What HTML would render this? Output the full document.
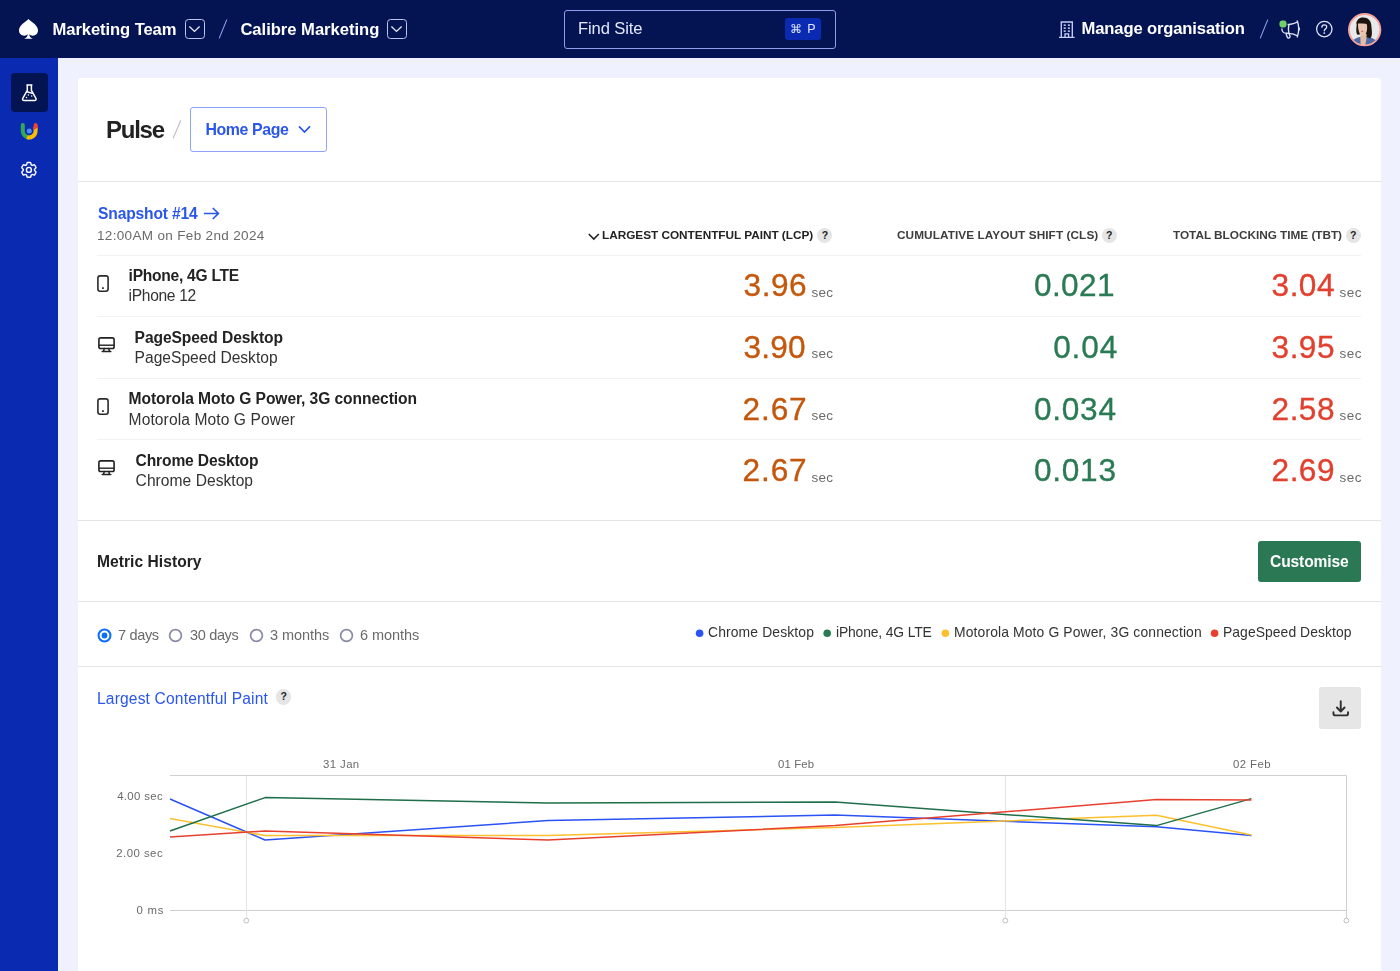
<!DOCTYPE html>
<html lang="en"><head><meta charset="utf-8"><title>Pulse – Calibre Marketing</title>
<style>
html,body{margin:0;padding:0}
body{width:1400px;height:971px;overflow:hidden;position:relative;background:#eff2fe;font-family:"Liberation Sans",Arial,sans-serif;}
.t{position:absolute;white-space:nowrap;line-height:1;}
.i{position:absolute;display:block;overflow:visible}
.hl{position:absolute;height:1px}
#top{position:absolute;left:0;top:0;width:1400px;height:58px;background:#041453}
#side{position:absolute;left:0;top:58px;width:58px;height:913px;background:#0a2ab2}
#card{position:absolute;left:78px;top:78px;width:1303px;height:900px;background:#fff;border-radius:3px}
.dd{position:absolute;width:18px;height:18px;border:1px solid #bcc4ea;border-radius:3.5px;box-sizing:content-box}
.q{position:absolute;width:15.2px;height:15.2px;border-radius:50%;background:#e5e5e5;color:#222;font-size:10.5px;font-weight:700;line-height:15.2px;text-align:center}
.dot{position:absolute;width:7.6px;height:7.6px;border-radius:50%}
#search{position:absolute;left:564px;top:10px;width:270px;height:37px;border:1px solid #8d9ef0;border-radius:3px}
#kbd{position:absolute;left:785px;top:17.6px;width:36.4px;height:22.2px;background:#0a2ab2;border-radius:3px}
#hp{position:absolute;left:190px;top:107.4px;width:135px;height:42.2px;border:1px solid #8ea2f8;border-radius:3px;background:#fff}
#cust{position:absolute;left:1257.6px;top:541px;width:103.4px;height:41px;background:#2b7855;border-radius:3px}
#dl{position:absolute;left:1319px;top:687px;width:42px;height:42px;background:#e6e6e6;border-radius:3px}
#tile{position:absolute;left:11px;top:73px;width:37px;height:39px;background:#041453;border-radius:4px}
</style></head><body>
<div id="top"></div><div id="side"></div><div id="card"></div>
<div id="tile"></div>
<!-- logo -->
<svg class="i" style="left:18.9px;top:18.9px" width="19" height="19.8" viewBox="0 0 19.2 20.4" preserveAspectRatio="none"><path fill="#fff" d="M9.6 0C8.400 2 0 5.800 0 11.700c0 3.300 2.400 5.600 5.300 5.600 1.500 0 2.800-.6 3.600-1.500C8.700 18 7.500 19.500 5.200 20.400h8.800c-2.300-.9-3.500-2.400-3.700-4.600.8.9 2.100 1.500 3.600 1.500 2.900 0 5.300-2.300 5.300-5.600C19.200 5.800 10.800 2 9.600 0z"/></svg>
<div class="dd" style="left:185px;top:19px"></div>
<svg class="i" style="left:185px;top:19px" width="20" height="20" viewBox="0 0 20 20"><path d="M4.400 7.600L9.500 12.400L14.600 7.600" fill="none" stroke="#e6eafc" stroke-width="1.400"/></svg>
<div class="dd" style="left:387.300px;top:19px"></div>
<svg class="i" style="left:387.300px;top:19px" width="20" height="20" viewBox="0 0 20 20"><path d="M4.400 7.600L9.500 12.400L14.600 7.600" fill="none" stroke="#e6eafc" stroke-width="1.400"/></svg>
<svg class="i" style="left:218px;top:19px" width="10" height="20" viewBox="0 0 10 20"><path d="M8.8 0.600L1.200 19.400" stroke="#8d9ef0" stroke-width="1.1"/></svg>
<svg class="i" style="left:1259px;top:19px" width="10" height="20" viewBox="0 0 10 20"><path d="M8.8 0.600L1.200 19.400" stroke="#8d9ef0" stroke-width="1.1"/></svg>
<div id="search"></div><div id="kbd"></div>
<!-- building -->
<svg class="i" style="left:1058.700px;top:21px" width="15.600" height="17" viewBox="0 0 15 17" preserveAspectRatio="none"><g fill="none" stroke="#c6cef7" stroke-width="1.3"><path d="M2.200 16.200V1h10.600v15.200M0 16.300h15"/><path d="M5.800 16.200v-3.400h3.400v3.400"/></g><g fill="#c6cef7"><rect x="4.500" y="3.400" width="2" height="1.500"/><rect x="8.500" y="3.400" width="2" height="1.500"/><rect x="4.500" y="6.400" width="2" height="1.500"/><rect x="8.500" y="6.400" width="2" height="1.500"/><rect x="4.500" y="9.400" width="2" height="1.500"/><rect x="8.500" y="9.400" width="2" height="1.500"/></g></svg>
<!-- megaphone -->
<svg class="i" style="left:1279.350px;top:17.900px" width="23.300" height="23.300" viewBox="0 0 24 24"><path fill="none" stroke="#dfe4fb" stroke-width="1.400" stroke-linecap="round" stroke-linejoin="round" d="M10.340 15.840c-.688-.060-1.386-.090-2.090-.090H7.500a4.500 4.500 0 110-9h.750c.704 0 1.402-.030 2.090-.090m0 9.180c.253.962.584 1.892.985 2.783.247.550.060 1.210-.463 1.511l-.657.380c-.551.318-1.260.117-1.527-.461a20.845 20.845 0 01-1.440-4.282m3.102.069a18.030 18.030 0 01-.590-4.590c0-1.586.205-3.124.590-4.590m0 9.180a23.848 23.848 0 018.835 2.535M10.340 6.660a23.847 23.847 0 008.835-2.535m0 0A23.740 23.740 0 0018.795 3m.380 1.125a23.910 23.910 0 011.014 5.395m-1.014 8.855c-.118.380-.245.754-.380 1.125m.380-1.125a23.910 23.910 0 001.014-5.395m0-3.460c.495.413.811 1.035.811 1.730 0 .695-.316 1.317-.811 1.730m0-3.460a24.347 24.347 0 010 3.460"/></svg><svg class="i" style="left:1277.700px;top:18.600px" width="10" height="10" viewBox="0 0 10 10"><circle cx="5" cy="5" r="4.100" fill="#6fd06a" stroke="#041453" stroke-width="1"/></svg>
<!-- help -->
<svg class="i" style="left:1315px;top:20px" width="18" height="18" viewBox="0 0 18 18"><circle cx="9.300" cy="9.100" r="7.700" fill="none" stroke="#dfe4fb" stroke-width="1.300"/><path d="M6.900 7.200c0-1.400 1-2.300 2.400-2.300s2.400.9 2.400 2.100c0 1.100-.7 1.600-1.400 2.100-.6.400-1 .8-1 1.700" fill="none" stroke="#dfe4fb" stroke-width="1.300" stroke-linecap="round"/><circle cx="9.300" cy="13.100" r=".9" fill="#dfe4fb"/></svg>
<!-- avatar -->
<svg class="i" style="left:1347.600px;top:12.650px" width="33.300" height="33.300" viewBox="0 0 33.300 33.300"><defs><clipPath id="av"><circle cx="16.650" cy="16.650" r="15"/></clipPath></defs><circle cx="16.650" cy="16.650" r="15.700" fill="#e8e9eb" stroke="#f7a397" stroke-width="1.900"/><g clip-path="url(#av)"><path d="M8.700 10.200C8.600 6.200 11.800 4.300 15.500 4.400c4.500.1 7.500 3.100 7.800 7.600.3 4 .9 7 .5 10.300l-1.500 3-5 .2z" fill="#1d140e"/><path d="M8.800 9.800l-.5 6.200c-.1 3 .3 5 1.300 5.800l2.200-.3V9.800z" fill="#1d140e"/><path d="M12.500 20.500l-.2 11.500h6.700l-.4-11z" fill="#e3bca6"/><path d="M10 10.200h8.600c1 3.800.6 8.300-.8 10.600-1 1.400-3.200 1.800-4.800.8-2-1.400-3-4.600-3-11.400z" fill="#e9c6b2"/><path d="M8.600 8.600c3.500-1 7.400-.8 10.600.4l.3 2c-3.600-.9-7.300-1-10.900-.3z" fill="#1d140e"/><path d="M13 18.200c.8-.5 1.700-.5 2.500 0-.7.900-1.800.9-2.500 0z" fill="#c9515c"/><path d="M4 28c2-2 5-3.400 8.400-4.300l.3 9.600H4zM28.500 28c-2-2.200-5.500-3.800-9.700-5l-.6 4.500-1.200 5.800h10z" fill="#4f6aa6"/><path d="M19 21.500l4.500 1.800-1.500 2.200-3.200-1.400z" fill="#1d140e"/></g></svg>
<!-- sidebar icons -->
<svg class="i" style="left:21px;top:83.5px" width="17" height="18" viewBox="0 0 17 18"><g fill="none" stroke="#fff" stroke-width="1.500" stroke-linejoin="round" stroke-linecap="round"><path d="M5.850 1.050h5M6.300 1.200v5.200L1.750 14.300c-.55 1 .15 2.200 1.300 2.200h10.600c1.150 0 1.850-1.200 1.300-2.200L10.400 6.400V1.200"/><path d="M5.600 7.700c2 .1 3.800 1.400 5.900 1.500"/></g><circle cx="7.400" cy="10.900" r=".75" fill="#fff"/><circle cx="10.700" cy="12" r=".75" fill="#fff"/><circle cx="5.500" cy="13.500" r=".75" fill="#fff"/></svg>
<svg class="i" style="left:20px;top:122px" width="19" height="19" viewBox="0 0 19 19"><g fill="none" stroke-width="4"><path d="M2.800 3V9A6.400 6.400 0 0 0 9.200 15.400" stroke="#34a853" stroke-linecap="round"/><path d="M15.600 6.500V3" stroke="#ea4335" stroke-linecap="round"/><path d="M7.010 15.010A6.400 6.400 0 0 0 15.600 9V5.600" stroke="#fbbc05"/><path d="M13.500 6.600l4.200-2.400" stroke="#ea4335" stroke-width="2.600"/></g><circle cx="9.300" cy="9" r="2.500" fill="#4d8df6"/></svg>
<svg class="i" style="left:19.100px;top:160.300px" width="19.800" height="19.800" viewBox="0 0 24 24"><g fill="none" stroke="#fff" stroke-width="1.700" stroke-linejoin="round" stroke-linecap="round"><path d="M9.594 3.940c.090-.542.560-.940 1.110-.940h2.593c.550 0 1.020.398 1.110.940l.213 1.281c.063.374.313.686.645.870.074.040.147.083.220.127.324.196.720.257 1.075.124l1.217-.456a1.125 1.125 0 011.370.490l1.296 2.247a1.125 1.125 0 01-.260 1.431l-1.003.827c-.293.240-.438.613-.431.992a6.759 6.759 0 010 .255c-.007.378.138.750.430.990l1.005.828c.424.350.534.954.260 1.430l-1.298 2.247a1.125 1.125 0 01-1.369.491l-1.217-.456c-.355-.133-.750-.072-1.076.124a6.570 6.570 0 01-.220.128c-.331.183-.581.495-.644.869l-.213 1.280c-.090.543-.560.941-1.110.941h-2.594c-.550 0-1.020-.398-1.110-.940l-.213-1.281c-.062-.374-.312-.686-.644-.870a6.520 6.520 0 01-.220-.127c-.325-.196-.720-.257-1.076-.124l-1.217.456a1.125 1.125 0 01-1.369-.490l-1.297-2.247a1.125 1.125 0 01.260-1.431l1.004-.827c.292-.240.437-.613.430-.992a6.932 6.932 0 010-.255c.007-.378-.138-.750-.430-.990l-1.004-.828a1.125 1.125 0 01-.260-1.430l1.297-2.247a1.125 1.125 0 011.370-.491l1.216.456c.356.133.751.072 1.076-.124.072-.44.146-.87.220-.128.332-.183.582-.495.644-.869l.214-1.281z"/><path d="M15 12a3 3 0 11-6 0 3 3 0 016 0z"/></g></svg>
<!-- page head -->
<svg class="i" style="left:172px;top:120px" width="10" height="19" viewBox="0 0 10 19"><path d="M8.800 0.300L1.200 18.300" stroke="#bdbdbd" stroke-width="1.100"/></svg>
<div id="hp"></div>
<svg class="i" style="left:298px;top:125px" width="13" height="9" viewBox="0 0 13 9"><path d="M1 1.400l5.500 5.700L12 1.400" fill="none" stroke="#2a56ea" stroke-width="1.700"/></svg>
<div class="hl" style="left:78px;top:181px;width:1303px;background:#e5e5e5"></div>
<!-- snapshot arrow -->
<svg class="i" style="left:203px;top:206.500px" width="17" height="13" viewBox="0 0 17 13"><path d="M.8 6.500h14.400M9.800 1l5.600 5.500L9.800 12" fill="none" stroke="#2a56ea" stroke-width="1.700"/></svg>
<svg class="i" style="left:588px;top:232.500px" width="12" height="8" viewBox="0 0 12 8"><path d="M.8 1l5 5 5-5" fill="none" stroke="#222" stroke-width="1.600"/></svg>
<span class="q" style="left:817.3px;top:227.5px">?</span><span class="q" style="left:1101.7px;top:227.5px">?</span><span class="q" style="left:1345.7px;top:227.5px">?</span>
<div class="hl" style="left:97px;top:255px;width:1264px;background:#f2f2f2"></div><div class="hl" style="left:97px;top:316px;width:1264px;background:#f2f2f2"></div><div class="hl" style="left:97px;top:378px;width:1264px;background:#f2f2f2"></div><div class="hl" style="left:97px;top:439px;width:1264px;background:#f2f2f2"></div>
<div class="hl" style="left:78px;top:520px;width:1303px;background:#e5e5e5"></div>
<svg class="i" style="left:97px;top:274.6px" width="12" height="17.2" viewBox="0 0 12 17.2"><rect x="0.9" y="0.9" width="10.2" height="15.4" rx="2.2" fill="none" stroke="#2a2a2a" stroke-width="1.6"/><rect x="5" y="12.2" width="1.9" height="1.7" rx=".4" fill="#2a2a2a"/></svg><svg class="i" style="left:97.5px;top:336.6px" width="17" height="16" viewBox="0 0 17 16"><rect x="0.9" y="0.9" width="15.2" height="10.6" rx="1.8" fill="none" stroke="#222" stroke-width="1.6"/><path d="M1 8.2h15" stroke="#222" stroke-width="1.4"/><path d="M6.2 11.5l-0.6 2.6M10.8 11.5l0.6 2.6M4.2 14.6h8.6" stroke="#222" stroke-width="1.5" fill="none" stroke-linecap="round"/></svg><svg class="i" style="left:97px;top:397.90000000000003px" width="12" height="17.2" viewBox="0 0 12 17.2"><rect x="0.9" y="0.9" width="10.2" height="15.4" rx="2.2" fill="none" stroke="#2a2a2a" stroke-width="1.6"/><rect x="5" y="12.2" width="1.9" height="1.7" rx=".4" fill="#2a2a2a"/></svg><svg class="i" style="left:97.5px;top:459.9px" width="17" height="16" viewBox="0 0 17 16"><rect x="0.9" y="0.9" width="15.2" height="10.6" rx="1.8" fill="none" stroke="#222" stroke-width="1.6"/><path d="M1 8.2h15" stroke="#222" stroke-width="1.4"/><path d="M6.2 11.5l-0.6 2.6M10.8 11.5l0.6 2.6M4.2 14.6h8.6" stroke="#222" stroke-width="1.5" fill="none" stroke-linecap="round"/></svg>
<div id="cust"></div>
<div class="hl" style="left:78px;top:601px;width:1303px;background:#e5e5e5"></div>
<svg class="i" style="left:96.5px;top:627.5px" width="15" height="15" viewBox="0 0 15 15"><circle cx="7.5" cy="7.5" r="5.950" fill="#fff" stroke="#0d6efd" stroke-width="2.100"/><circle cx="7.5" cy="7.5" r="2.900" fill="#0d6efd"/></svg><svg class="i" style="left:167.8px;top:627.5px" width="15" height="15" viewBox="0 0 15 15"><circle cx="7.5" cy="7.5" r="5.900" fill="#fff" stroke="#888ba3" stroke-width="1.700"/></svg><svg class="i" style="left:248.5px;top:627.5px" width="15" height="15" viewBox="0 0 15 15"><circle cx="7.5" cy="7.5" r="5.900" fill="#fff" stroke="#888ba3" stroke-width="1.700"/></svg><svg class="i" style="left:338.5px;top:627.5px" width="15" height="15" viewBox="0 0 15 15"><circle cx="7.5" cy="7.5" r="5.900" fill="#fff" stroke="#888ba3" stroke-width="1.700"/></svg>
<svg class="i" style="left:694px;top:628px" width="10" height="10" viewBox="0 0 10 10"><circle cx="5.60" cy="5.20" r="3.8" fill="#2a52f5"/></svg><svg class="i" style="left:822px;top:628px" width="10" height="10" viewBox="0 0 10 10"><circle cx="5.20" cy="5.20" r="3.8" fill="#2a7a54"/></svg><svg class="i" style="left:940px;top:628px" width="10" height="10" viewBox="0 0 10 10"><circle cx="5.40" cy="5.20" r="3.8" fill="#fcc02e"/></svg><svg class="i" style="left:1209px;top:628px" width="10" height="10" viewBox="0 0 10 10"><circle cx="5.60" cy="5.20" r="3.8" fill="#e8402f"/></svg>
<div class="hl" style="left:78px;top:666px;width:1303px;background:#e5e5e5"></div>
<span class="q" style="left:276.2px;top:689.4px">?</span>
<div id="dl"></div>
<svg class="i" style="left:1331.500px;top:699.500px" width="17.800" height="17" viewBox="0 0 17.800 17"><g fill="none" stroke="#2f2f2f" stroke-width="1.900" stroke-linecap="round" stroke-linejoin="round"><path d="M8.750 1.300v10M4.950 7.500l3.800 4 3.800-4"/><path d="M1.450 12.100v1.300c0 1.100.9 2 2 2h10.600c1.100 0 2-.9 2-2v-1.300"/></g></svg>
<svg class="i" style="left:0;top:740px" width="1400" height="231" viewBox="0 740 1400 231">
<g stroke="#cfcfcf" stroke-width="1" fill="none">
<path d="M170 775.5H1346.5M170 910.5H1346.5"/>
</g>
<g stroke="#e4e4e4" stroke-width="1" fill="none"><path d="M246.5 776V918M1005.5 776V918"/></g>
<path d="M1346.5 775.5V918" stroke="#cfcfcf" stroke-width="1" fill="none"/>
<g fill="#fff" stroke="#b5b5b5" stroke-width="0.9"><circle cx="246.3" cy="920.6" r="2.4"/><circle cx="1005.3" cy="920.6" r="2.4"/><circle cx="1346.4" cy="920.6" r="2.4"/></g>
<polyline points="170.0,799.0 265.0,840.0 548.0,820.6 835.0,815.0 1156.5,826.8 1251.4,835.6" fill="none" stroke="#2a52f5" stroke-width="1.5" stroke-linejoin="round"/>
<polyline points="170.0,818.6 265.0,835.6 548.0,835.6 835.0,827.4 1156.5,815.2 1251.4,835.0" fill="none" stroke="#fcc02e" stroke-width="1.5" stroke-linejoin="round"/>
<polyline points="170.0,831.0 265.0,797.6 548.0,803.0 835.0,802.0 1156.5,825.6 1251.4,798.6" fill="none" stroke="#1f6e49" stroke-width="1.5" stroke-linejoin="round"/>
<polyline points="170.0,837.0 265.0,831.0 548.0,840.0 835.0,825.6 1156.5,799.6 1251.4,800.0" fill="none" stroke="#e8402f" stroke-width="1.5" stroke-linejoin="round"/>
</svg>
<div id="txt" style="position:absolute;left:0;top:0;width:1400px;height:971px;will-change:transform">
<span class="t" id="t1" style="top:22.00px;font-size:16.6px;font-weight:700;color:#fff;left:52.60px;letter-spacing:-0.093px;">Marketing Team</span>
<span class="t" id="t2" style="top:22.00px;font-size:16.6px;font-weight:700;color:#fff;left:240.40px;letter-spacing:-0.022px;">Calibre Marketing</span>
<span class="t" id="t3" style="top:21.00px;font-size:16.6px;font-weight:400;color:#e3e7fa;left:578.00px;letter-spacing:-0.125px;">Find Site</span>
<span class="t" id="t4a" style="top:24.00px;font-size:11.5px;font-weight:400;color:#dfe4fb;left:790.00px;font-family:"DejaVu Sans","Liberation Sans",sans-serif;">⌘</span>
<span class="t" id="t4b" style="top:23.01px;font-size:12.5px;font-weight:400;color:#dfe4fb;left:807.20px;">P</span>
<span class="t" id="t5" style="top:21.00px;font-size:16.6px;font-weight:700;color:#fff;left:1081.60px;letter-spacing:-0.144px;">Manage organisation</span>
<span class="t" id="h1" style="top:118.01px;font-size:24px;font-weight:700;color:#222;left:106.00px;letter-spacing:-1.250px;">Pulse</span>
<span class="t" id="h2" style="top:122.40px;font-size:15.9px;font-weight:700;color:#2a56ea;left:205.40px;letter-spacing:-0.375px;">Home Page</span>
<span class="t" id="s1" style="top:205.60px;font-size:15.6px;font-weight:700;color:#2a56ea;left:98.00px;letter-spacing:-0.147px;">Snapshot #14</span>
<span class="t" id="s2" style="top:229.01px;font-size:13.5px;font-weight:400;color:#6a6a6a;left:97.00px;letter-spacing:0.336px;">12:00AM on Feb 2nd 2024</span>
<span class="t" id="c1" style="top:230.41px;font-size:11.8px;font-weight:700;color:#222;left:602.00px;letter-spacing:-0.023px;">LARGEST CONTENTFUL PAINT (LCP)</span>
<span class="t" id="c2" style="top:230.41px;font-size:11.8px;font-weight:700;color:#3d3d3d;left:897.00px;letter-spacing:0.073px;">CUMULATIVE LAYOUT SHIFT (CLS)</span>
<span class="t" id="c3" style="top:230.41px;font-size:11.8px;font-weight:700;color:#3d3d3d;left:1173.00px;letter-spacing:-0.028px;">TOTAL BLOCKING TIME (TBT)</span>
<span class="t" id="r0a" style="top:268.01px;font-size:15.6px;font-weight:700;color:#222;left:128.60px;letter-spacing:-0.267px;">iPhone, 4G LTE</span>
<span class="t" id="r0b" style="top:288.40px;font-size:15.6px;font-weight:400;color:#333;left:128.60px;letter-spacing:-0.325px;">iPhone 12</span>
<span class="t" id="r0l" style="top:270.30px;font-size:31.6px;font-weight:400;color:#c4570c;left:743.60px;letter-spacing:0.536px;-webkit-text-stroke:0.35px #c4570c;">3.96</span>
<span class="t" id="r0ls" style="top:285.60px;font-size:13.5px;font-weight:400;color:#6a6a6a;left:811.60px;letter-spacing:0.200px;">sec</span>
<span class="t" id="r0c" style="top:270.30px;font-size:31.6px;font-weight:400;color:#2a7a54;left:1034.00px;letter-spacing:0.350px;-webkit-text-stroke:0.35px #2a7a54;">0.021</span>
<span class="t" id="r0t" style="top:270.30px;font-size:31.6px;font-weight:400;color:#e2402f;left:1271.60px;letter-spacing:0.464px;-webkit-text-stroke:0.35px #e2402f;">3.04</span>
<span class="t" id="r0ts" style="top:285.60px;font-size:13.5px;font-weight:400;color:#6a6a6a;left:1339.60px;letter-spacing:0.500px;">sec</span>
<span class="t" id="r1a" style="top:329.65px;font-size:15.6px;font-weight:700;color:#222;left:134.60px;letter-spacing:-0.097px;">PageSpeed Desktop</span>
<span class="t" id="r1b" style="top:350.05px;font-size:15.6px;font-weight:400;color:#333;left:134.60px;letter-spacing:-0.004px;">PageSpeed Desktop</span>
<span class="t" id="r1l" style="top:331.96px;font-size:31.6px;font-weight:400;color:#c4570c;left:743.60px;letter-spacing:0.202px;-webkit-text-stroke:0.35px #c4570c;">3.90</span>
<span class="t" id="r1ls" style="top:347.26px;font-size:13.5px;font-weight:400;color:#6a6a6a;left:811.60px;letter-spacing:0.200px;">sec</span>
<span class="t" id="r1c" style="top:331.96px;font-size:31.6px;font-weight:400;color:#2a7a54;left:1053.20px;letter-spacing:0.865px;-webkit-text-stroke:0.35px #2a7a54;">0.04</span>
<span class="t" id="r1t" style="top:331.96px;font-size:31.6px;font-weight:400;color:#e2402f;left:1271.60px;letter-spacing:0.463px;-webkit-text-stroke:0.35px #e2402f;">3.95</span>
<span class="t" id="r1ts" style="top:347.26px;font-size:13.5px;font-weight:400;color:#6a6a6a;left:1339.60px;letter-spacing:0.500px;">sec</span>
<span class="t" id="r2a" style="top:391.30px;font-size:15.6px;font-weight:700;color:#222;left:128.60px;letter-spacing:-0.077px;">Motorola Moto G Power, 3G connection</span>
<span class="t" id="r2b" style="top:411.71px;font-size:15.6px;font-weight:400;color:#333;left:128.60px;letter-spacing:0.090px;">Motorola Moto G Power</span>
<span class="t" id="r2l" style="top:393.60px;font-size:31.6px;font-weight:400;color:#c4570c;left:742.60px;letter-spacing:0.867px;-webkit-text-stroke:0.35px #c4570c;">2.67</span>
<span class="t" id="r2ls" style="top:408.91px;font-size:13.5px;font-weight:400;color:#6a6a6a;left:811.60px;letter-spacing:0.200px;">sec</span>
<span class="t" id="r2c" style="top:393.60px;font-size:31.6px;font-weight:400;color:#2a7a54;left:1033.90px;letter-spacing:0.750px;-webkit-text-stroke:0.35px #2a7a54;">0.034</span>
<span class="t" id="r2t" style="top:393.60px;font-size:31.6px;font-weight:400;color:#e2402f;left:1271.60px;letter-spacing:0.464px;-webkit-text-stroke:0.35px #e2402f;">2.58</span>
<span class="t" id="r2ts" style="top:408.91px;font-size:13.5px;font-weight:400;color:#6a6a6a;left:1339.60px;letter-spacing:0.500px;">sec</span>
<span class="t" id="r3a" style="top:452.96px;font-size:15.6px;font-weight:700;color:#222;left:135.60px;letter-spacing:-0.147px;">Chrome Desktop</span>
<span class="t" id="r3b" style="top:473.35px;font-size:15.6px;font-weight:400;color:#333;left:135.60px;letter-spacing:0.034px;">Chrome Desktop</span>
<span class="t" id="r3l" style="top:455.25px;font-size:31.6px;font-weight:400;color:#c4570c;left:742.60px;letter-spacing:0.867px;-webkit-text-stroke:0.35px #c4570c;">2.67</span>
<span class="t" id="r3ls" style="top:470.56px;font-size:13.5px;font-weight:400;color:#6a6a6a;left:811.60px;letter-spacing:0.200px;">sec</span>
<span class="t" id="r3c" style="top:455.25px;font-size:31.6px;font-weight:400;color:#2a7a54;left:1033.90px;letter-spacing:0.750px;-webkit-text-stroke:0.35px #2a7a54;">0.013</span>
<span class="t" id="r3t" style="top:455.25px;font-size:31.6px;font-weight:400;color:#e2402f;left:1271.60px;letter-spacing:0.464px;-webkit-text-stroke:0.35px #e2402f;">2.69</span>
<span class="t" id="r3ts" style="top:470.56px;font-size:13.5px;font-weight:400;color:#6a6a6a;left:1339.60px;letter-spacing:0.500px;">sec</span>
<span class="t" id="m1" style="top:554.01px;font-size:15.6px;font-weight:700;color:#222;left:97.00px;letter-spacing:0.042px;">Metric History</span>
<span class="t" id="m2" style="top:554.01px;font-size:15.6px;font-weight:700;color:#fff;left:1270.00px;letter-spacing:-0.125px;">Customise</span>
<span class="t" id="d1" style="top:628.01px;font-size:14.5px;font-weight:400;color:#6a6a6a;left:118.00px;letter-spacing:-0.320px;">7 days</span>
<span class="t" id="d2" style="top:628.01px;font-size:14.5px;font-weight:400;color:#6a6a6a;left:190.00px;letter-spacing:-0.334px;">30 days</span>
<span class="t" id="d3" style="top:628.01px;font-size:14.5px;font-weight:400;color:#6a6a6a;left:270.00px;letter-spacing:-0.061px;">3 months</span>
<span class="t" id="d4" style="top:628.01px;font-size:14.5px;font-weight:400;color:#6a6a6a;left:360.00px;letter-spacing:-0.061px;">6 months</span>
<span class="t" id="l1" style="top:626.40px;font-size:13.9px;font-weight:400;color:#333;left:708.00px;letter-spacing:0.126px;">Chrome Desktop</span>
<span class="t" id="l2" style="top:626.40px;font-size:13.9px;font-weight:400;color:#333;left:836.00px;letter-spacing:-0.154px;">iPhone, 4G LTE</span>
<span class="t" id="l3" style="top:626.40px;font-size:13.9px;font-weight:400;color:#333;left:954.00px;letter-spacing:0.128px;">Motorola Moto G Power, 3G connection</span>
<span class="t" id="l4" style="top:626.40px;font-size:13.9px;font-weight:400;color:#333;left:1223.00px;letter-spacing:0.062px;">PageSpeed Desktop</span>
<span class="t" id="g1" style="top:691.00px;font-size:15.6px;font-weight:400;color:#2a56ea;left:97.00px;letter-spacing:0.154px;">Largest Contentful Paint</span>
<span class="t" id="x1" style="top:759.00px;font-size:11.4px;font-weight:400;color:#6a6a6a;left:323.00px;letter-spacing:0.400px;">31 Jan</span>
<span class="t" id="x2" style="top:759.00px;font-size:11.4px;font-weight:400;color:#6a6a6a;left:778.00px;letter-spacing:0.120px;">01 Feb</span>
<span class="t" id="x3" style="top:759.00px;font-size:11.4px;font-weight:400;color:#6a6a6a;left:1233.00px;letter-spacing:0.400px;">02 Feb</span>
<span class="t" id="y1" style="top:791.40px;font-size:11.4px;font-weight:400;color:#6a6a6a;left:117.20px;letter-spacing:0.341px;">4.00 sec</span>
<span class="t" id="y2" style="top:848.00px;font-size:11.4px;font-weight:400;color:#6a6a6a;left:116.20px;letter-spacing:0.482px;">2.00 sec</span>
<span class="t" id="y3" style="top:905.00px;font-size:11.4px;font-weight:400;color:#6a6a6a;left:136.60px;letter-spacing:0.736px;">0 ms</span>
</div>
</body></html>
